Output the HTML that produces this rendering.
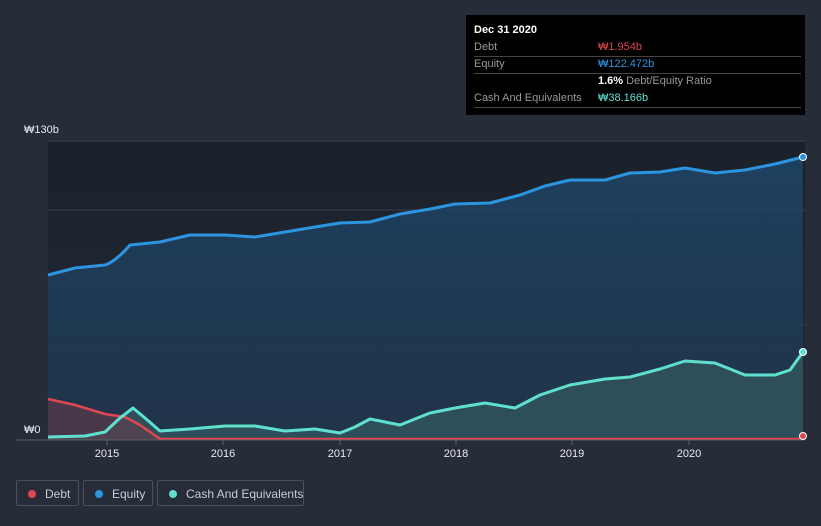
<!DOCTYPE html>
<html><head><meta charset="utf-8"><style>
html,body{margin:0;padding:0;background:#262d38;width:821px;height:526px;overflow:hidden;font-family:"Liberation Sans","Noto Sans CJK KR",sans-serif}
.tt{position:absolute;left:466px;top:15px;width:339px;height:100px;background:#000;color:#fff;font-size:11px}
.tt .r{position:absolute;left:8px;right:4px;border-bottom:1px solid #444;height:17px;line-height:17px;color:#999;white-space:nowrap}
.lg{position:absolute;top:480px;height:26px;border:1px solid #4a515c;border-radius:2px;color:#c8ccd2;font-size:12px;line-height:26px;box-sizing:border-box;white-space:nowrap}
.lg i{position:absolute;left:11px;top:9px;width:8px;height:8px;border-radius:50%}
</style></head><body>
<svg width="821" height="526" style="position:absolute;left:0;top:0">
<defs><linearGradient id="bg" x1="0" y1="0" x2="0" y2="1"><stop offset="0" stop-color="#1b212b"/><stop offset="1" stop-color="#232b36"/></linearGradient>
<linearGradient id="eq" x1="0" y1="0" x2="0" y2="1"><stop offset="0" stop-color="#1e4466" stop-opacity=".9"/><stop offset="1" stop-color="#1e3a56" stop-opacity=".6"/></linearGradient></defs>
<rect x="48" y="141" width="757" height="299" fill="url(#bg)"/>
<g stroke="#3a414c" stroke-width="1"><line x1="48" y1="141" x2="805" y2="141"/><line x1="48" y1="210" x2="805" y2="210"/><line x1="48" y1="325" x2="805" y2="325"/></g>
<path d="M48,275 L75,268 105,265 Q115,262 130,245 L160,242 190,235 225,235 255,237 285,232 315,227 340,223 370,222 400,214 430,209 455,204 490,203 520,195 545,186 570,180 605,180 630,173 660,172 685,168 715,173 745,170 775,164 803,157 L803,440 48,440Z" fill="url(#eq)"/>
<path d="M48,437 L85,436 105,432 120,418 133,408 145,418 160,431 190,429 225,426 255,426 285,431 315,429 340,433 355,427 370,419 400,425 430,413 455,408 485,403 515,408 540,395 570,385 605,379 630,377 660,369 685,361 715,363 745,375 775,375 790,370 803,352 L803,440 48,440Z" fill="#3a6466" fill-opacity=".55"/>
<path d="M48,399 L75,405 105,414 125,417 140,425 160,440 L48,440Z" fill="#6a3a48" fill-opacity=".55"/>
<path d="M48,275 L75,268 105,265 Q115,262 130,245 L160,242 190,235 225,235 255,237 285,232 315,227 340,223 370,222 400,214 430,209 455,204 490,203 520,195 545,186 570,180 605,180 630,173 660,172 685,168 715,173 745,170 775,164 803,157" fill="none" stroke="#2d94e0" stroke-width="3" stroke-linejoin="round"/>
<path d="M48,399 L75,405 105,414 125,417 140,425 160,439 L800,439 803,436" fill="none" stroke="#e0474f" stroke-width="2.5" stroke-linejoin="round"/>
<path d="M48,437 L85,436 105,432 120,418 133,408 145,418 160,431 190,429 225,426 255,426 285,431 315,429 340,433 355,427 370,419 400,425 430,413 455,408 485,403 515,408 540,395 570,385 605,379 630,377 660,369 685,361 715,363 745,375 775,375 790,370 803,352" fill="none" stroke="#5fe0cf" stroke-width="3" stroke-linejoin="round"/>
<line x1="16" y1="440" x2="805" y2="440" stroke="#5a616c"/>
<g stroke="#5a616c"><line x1="107" y1="440" x2="107" y2="445"/><line x1="223" y1="440" x2="223" y2="445"/><line x1="340" y1="440" x2="340" y2="445"/><line x1="456" y1="440" x2="456" y2="445"/><line x1="572" y1="440" x2="572" y2="445"/><line x1="689" y1="440" x2="689" y2="445"/></g>
<circle cx="803" cy="157" r="3.5" fill="#2d94e0" stroke="#fff" stroke-width="1"/>
<circle cx="803" cy="352" r="3.5" fill="#5fe0cf" stroke="#fff" stroke-width="1"/>
<circle cx="803" cy="436" r="3.5" fill="#e0474f" stroke="#fff" stroke-width="1"/>
<g fill="#e8eaed" font-size="11" font-family="Liberation Sans, Noto Sans CJK KR, sans-serif">
<text x="24" y="133">₩130b</text><text x="24" y="433">₩0</text>
<g text-anchor="middle"><text x="107" y="457">2015</text><text x="223" y="457">2016</text><text x="340" y="457">2017</text><text x="456" y="457">2018</text><text x="572" y="457">2019</text><text x="689" y="457">2020</text></g></g>
</svg>
<div class="tt">
<div style="position:absolute;left:8px;top:9px;font-weight:bold;font-size:11px">Dec 31 2020</div>
<div class="r" style="top:24px">Debt<span style="position:absolute;left:124px;color:#e0474f">₩1.954b</span></div>
<div class="r" style="top:41px">Equity<span style="position:absolute;left:124px;color:#2d94e0">₩122.472b</span></div>
<div class="r" style="top:58px;border:0"><span style="position:absolute;left:124px;color:#999"><b style="color:#fff">1.6%</b> Debt/Equity Ratio</span></div>
<div class="r" style="top:75px">Cash And Equivalents<span style="position:absolute;left:124px;color:#5fe0cf">₩38.166b</span></div>
</div>
<div class="lg" style="left:16px;width:63px"><i style="background:#e0474f"></i><span style="position:absolute;left:28px">Debt</span></div>
<div class="lg" style="left:83px;width:70px"><i style="background:#2d94e0"></i><span style="position:absolute;left:28px">Equity</span></div>
<div class="lg" style="left:157px;width:147px"><i style="background:#5fe0cf"></i><span style="position:absolute;left:28px">Cash And Equivalents</span></div>
</body></html>
